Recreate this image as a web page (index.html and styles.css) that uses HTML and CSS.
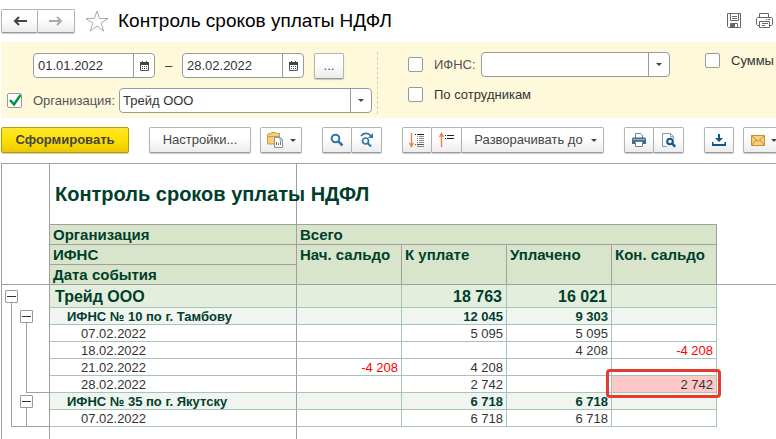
FILE: index.html
```html
<!DOCTYPE html>
<html lang="ru">
	<head>
		<meta charset="UTF-8">
		<title>Контроль сроков уплаты НДФЛ</title>
		<link rel="stylesheet" href="styles.css">
	</head>
	<body>
		<header class="header">
			<div class="group">
				<button class="btn nav" type="button" aria-label="Назад"><svg width="14" height="10" viewBox="0 0 14 10"><path d="M6 1L2 5l4 4M2 5h12" fill="none" stroke="#444" stroke-width="2"/></svg></button>
				<button class="btn nav" type="button" aria-label="Вперед"><svg width="14" height="10" viewBox="0 0 14 10"><path d="M8 1l4 4-4 4M12 5H0" fill="none" stroke="#aaa" stroke-width="2"/></svg></button>
			</div>
			<button class="icon star" type="button" aria-label="В избранное"><svg width="24" height="22" viewBox="0 0 24 22"><path d="M12 1l2.600 7.500H23l-6.800 4.600 2.600 8-6.800-5-6.800 5 2.600-8L1 8.500h8.400z" fill="#fff" stroke="#a5aab3"/></svg></button>
			<h1 class="title">Контроль сроков уплаты НДФЛ</h1>
			<button class="icon save" type="button" aria-label="Сохранить"><svg width="16" height="16" viewBox="0 0 16 16" fill="none" stroke="#666"><path d="M1.500.5h13v14h-12l-1-1z"/><path d="M4.500.5v7h8v-7M6 3.500h5M6 5.500h5M4.500 14.500v-4h7v4"/><path d="M5 11h4v3H5z" fill="#666" stroke="none"/></svg></button>
			<button class="icon print" type="button" aria-label="Печать"><svg width="17" height="16" viewBox="0 0 17 16" fill="none" stroke="#666"><path d="M3.500 4.500v-4h9v4M3.500 12.500h-2l-1-1v-6l1-1h14l1 1v6l-1 1h-2M10 6.500h1M12 6.500h2M3.500 8.500h10v6h-10zM6 10.500h6M6 12.500h3"/></svg></button>
		</header>

		<form class="filter">
			<div class="col period">
				<div class="row dates">
					<div class="field date">
						<input type="text" value="01.01.2022" aria-label="Начало периода">
						<button type="button" aria-label="Выбрать дату"><svg width="9" height="10" viewBox="0 0 9 10"><path d="M.5 1.500h8v8h-8z" fill="#fff" stroke="#555"/><path d="M0 1h9v3H0zM2 0h1v1H2zM6 0h1v1H6zM2 5h1v1H2zM4 5h1v1H4zM6 5h1v1H6zM2 7h1v1H2zM4 7h1v1H4zM6 7h1v1H6z" fill="#444"/></svg></button>
					</div>
					<span class="dash">–</span>
					<div class="field date">
						<input type="text" value="28.02.2022" aria-label="Конец периода">
						<button type="button" aria-label="Выбрать дату"><svg width="9" height="10" viewBox="0 0 9 10"><path d="M.5 1.500h8v8h-8z" fill="#fff" stroke="#555"/><path d="M0 1h9v3H0zM2 0h1v1H2zM6 0h1v1H6zM2 5h1v1H2zM4 5h1v1H4zM6 5h1v1H6zM2 7h1v1H2zM4 7h1v1H4zM6 7h1v1H6z" fill="#444"/></svg></button>
					</div>
					<button class="btn more" type="button">...</button>
				</div>
				<div class="row">
					<input class="check" type="checkbox" id="use_org" checked aria-label="Отбор по организации">
					<label class="muted" for="org">Организация:</label>
					<div class="field combo">
						<select id="org"><option>Трейд ООО</option></select>
						<i class="arrow"></i>
					</div>
				</div>
			</div>
			<div class="col inspection">
				<div class="row">
					<input class="check" type="checkbox" id="use_ifns" aria-label="Отбор по ИФНС">
					<label class="muted" for="ifns">ИФНС:</label>
					<div class="field combo">
						<select id="ifns"><option></option></select>
						<i class="arrow"></i>
					</div>
				</div>
				<div class="row">
					<input class="check" type="checkbox" id="by_staff">
					<label for="by_staff">По сотрудникам</label>
				</div>
			</div>
			<div class="col sums">
				<input class="check" type="checkbox" id="sums">
				<label for="sums">Суммы</label>
			</div>
		</form>

		<div class="toolbar">
			<button class="btn primary" type="button">Сформировать</button>
			<button class="btn settings" type="button">Настройки...</button>
			<button class="btn menu" type="button" aria-label="Варианты отчета">
				<svg width="17" height="16" viewBox="0 0 17 16"><path d="M.5 12V2.500l1-1h2l1-1h4l1 1h3V12z" fill="#f6cd7a" stroke="#cf9a3d"/><path d="M1 4.500h12" stroke="#cf9a3d"/><path d="M7.500 5.500h6l2 2v8h-8z" fill="#fff" stroke="#8296aa"/><path d="M13 5.500v2.500h2.500" fill="none" stroke="#8296aa"/><path d="M9 10h1v3H9z" fill="#e33"/><path d="M11 11h1v2h-1z" fill="#39b"/><path d="M13 9h1v4h-1z" fill="#3a4"/></svg>
				<i class="arrow"></i>
			</button>
			<div class="group">
				<button class="btn tool" type="button" aria-label="Найти"><svg width="14" height="14" viewBox="0 0 14 14" fill="none" stroke="#2e77a8"><circle cx="5.500" cy="5.500" r="3.800" stroke-width="2"/><path d="M8.500 8.500l4 4" stroke-width="2.500"/></svg></button>
				<button class="btn tool" type="button" aria-label="Найти далее"><svg width="14" height="16" viewBox="0 0 14 16" fill="none" stroke="#2e77a8"><path d="M1 4C3 1 8 0 11 4" stroke-width="1.600"/><path d="M13 1v5H8z" fill="#2e77a8" stroke="none"/><circle cx="5.500" cy="9" r="3" stroke-width="1.700"/><path d="M8 11.500l3 3" stroke-width="2"/></svg></button>
			</div>
			<div class="group">
				<button class="btn tool" type="button" aria-label="Развернуть все"><svg width="16" height="16" viewBox="0 0 16 16" fill="none"><path d="M2.500 1v13M.5 11l2 3.500 2-3.500" stroke="#ee8352" stroke-width="1.400"/><path d="M6 2.500h1M8 2.500h7" stroke="#222"/><path d="M8 4.500h1M10 4.500h5M8 6.500h1M10 6.500h5M8 8.500h1M10 8.500h5M8 10.500h1M10 10.500h5M8 14.500h7" stroke="#888"/><path d="M6 12.500h1M8 12.500h7" stroke="#555"/></svg></button>
				<button class="btn tool" type="button" aria-label="Свернуть все"><svg width="16" height="16" viewBox="0 0 16 16" fill="none"><path d="M2.500 15V2M.5 5l2-3.500 2 3.500" stroke="#ee8352" stroke-width="1.400"/><path d="M6 3.500h1M8 3.500h7M6 6.500h1M8 6.500h7" stroke="#222"/></svg></button>
				<button class="btn expand" type="button">Разворачивать до <i class="arrow"></i></button>
			</div>
			<div class="group">
				<button class="btn tool" type="button" aria-label="Печать"><svg width="14" height="14" viewBox="0 0 14 14"><path d="M3.500 5V.5h5l2 2V5" fill="#fff" stroke="#6b8299"/><path d="M1 4.500h12l1 1V11H0V5.500z" fill="#3f6a92"/><path d="M1 6.500h12" stroke="#9db6cc"/><path d="M3.500 8.500h7v5h-7z" fill="#fff" stroke="#6b8299"/></svg></button>
				<button class="btn tool" type="button" aria-label="Предварительный просмотр"><svg width="14" height="15" viewBox="0 0 14 15" fill="none"><path d="M5 13.500H.5V.5h8l3 3V6M8.500.5v3h3" stroke="#8a9bab"/><circle cx="8" cy="8.500" r="2.800" stroke="#0f5586" stroke-width="2"/><path d="M10 10.500l3.200 3.200" stroke="#0f5586" stroke-width="2.400"/></svg></button>
			</div>
			<button class="btn tool" type="button" aria-label="Сохранить"><svg width="14" height="12" viewBox="0 0 14 12"><path d="M6 0h2v4h3L7 8 3 4h3zM0 8h1.500v2h11V8H14v4H0z" fill="#0f5586"/></svg></button>
			<button class="btn menu mail" type="button" aria-label="Отправить">
				<svg width="14" height="11" viewBox="0 0 14 11"><path d="M.5.5h13v10H.5z" fill="#f7cf7e" stroke="#c98f2c"/><path d="M.5.5L7 6.500l6.500-6M.5 10.500L5 5M13.500 10.500L9 5" fill="none" stroke="#c98f2c"/></svg>
				<i class="arrow"></i>
			</button>
		</div>

		<main class="sheet">
			<table class="report">
				<colgroup>
					<col class="c-tree"><col class="c-name"><col class="c-sum"><col class="c-sum"><col class="c-sum"><col class="c-sum"><col>
				</colgroup>
				<thead>
					<tr class="caption">
						<td rowspan="4" class="corner"></td>
						<td class="name"><h2>Контроль сроков уплаты НДФЛ</h2></td>
						<td colspan="4"></td>
						<td rowspan="4" class="rest"></td>
					</tr>
					<tr class="head">
						<th>Организация</th>
						<th colspan="4">Всего</th>
					</tr>
					<tr class="head">
						<th>ИФНС</th>
						<th rowspan="2">Нач. сальдо</th>
						<th rowspan="2">К уплате</th>
						<th rowspan="2">Уплачено</th>
						<th rowspan="2">Кон. сальдо</th>
					</tr>
					<tr class="head">
						<th>Дата события</th>
					</tr>
				</thead>
				<tbody>
					<tr class="org">
						<td rowspan="8" class="gutter">
							<div class="tree">
								<span class="branch branch-org"></span>
								<span class="branch branch-first"></span>
								<span class="branch branch-second"></span>
								<button class="toggle toggle-org" type="button" aria-label="Свернуть"></button>
								<button class="toggle toggle-first" type="button" aria-label="Свернуть"></button>
								<button class="toggle toggle-second" type="button" aria-label="Свернуть"></button>
							</div>
						</td>
						<td class="name">Трейд ООО</td><td></td><td>18 763</td><td>16 021</td><td></td>
					</tr>
					<tr class="ifns">
						<td class="name">ИФНС № 10 по г. Тамбову</td><td></td><td>12 045</td><td>9 303</td><td></td>
					</tr>
					<tr class="day">
						<td class="name">07.02.2022</td><td></td><td>5 095</td><td>5 095</td><td></td>
					</tr>
					<tr class="day">
						<td class="name">18.02.2022</td><td></td><td></td><td>4 208</td><td class="minus">-4 208</td>
					</tr>
					<tr class="day">
						<td class="name">21.02.2022</td><td class="minus">-4 208</td><td>4 208</td><td></td><td></td>
					</tr>
					<tr class="day">
						<td class="name">28.02.2022</td><td></td><td>2 742</td><td></td><td class="debt">2 742</td>
					</tr>
					<tr class="ifns">
						<td class="name">ИФНС № 35 по г. Якутску</td><td></td><td>6 718</td><td>6 718</td><td></td>
					</tr>
					<tr class="day">
						<td class="name">07.02.2022</td><td></td><td>6 718</td><td>6 718</td><td></td>
					</tr>
				</tbody>
				<tfoot>
					<tr class="tail"><td></td><td></td><td colspan="5"></td></tr>
				</tfoot>
			</table>
		</main>
	</body>
</html>
```

FILE: styles.css
```css
*{
	box-sizing: border-box;
	margin: 0;
	padding: 0;
}
body{
	display: flex;
	flex-direction: column;
	min-height: 100vh;
	padding-left: 1px;
	background: #fff;
	color: #333;
	font: 13px/16px "Liberation Sans", Arial, sans-serif;
	overflow-x: hidden;
}
button, input, select{
	font: inherit;
	color: inherit;
}
svg{
	display: block;
	flex: none;
}

/* кнопки */
.btn{
	display: flex;
	align-items: center;
	justify-content: center;
	flex: none;
	height: 26px;
	border: 1px solid #b4b4b4;
	border-bottom-color: #999;
	border-radius: 2px;
	background: linear-gradient(#fff 40%, #ececec);
	box-shadow: 0 1px 1px rgba(0,0,0,0.2);
	color: #444;
	white-space: nowrap;
}
.icon{
	flex: none;
	border: 0;
	background: none;
}
.group{
	display: flex;
	flex: none;
}
.group .btn + .btn{
	border-left: 0;
	border-radius: 0 2px 2px 0;
}
.arrow{
	flex: none;
	width: 0;
	height: 0;
	border: 3px solid transparent;
	border-top-color: #444;
	border-bottom: 0;
}

.header{
	display: flex;
	align-items: center;
	height: 42px;
	padding-right: 3px;
}
.nav{
	width: 37px;
	height: 24px;
}
.star{
	margin-left: 10px;
}
.title{
	flex: 1;
	margin-left: 9px;
	color: #000;
	font-size: 19px;
	line-height: 24px;
	font-weight: normal;
	white-space: nowrap;
}
.print{
	margin-left: 14px;
}

/* отборы */
.filter{
	display: flex;
	height: 76px;
	padding-top: 10px;
	background: #fff9db;
	overflow: hidden;
}
.col{
	flex: none;
}
.row{
	display: flex;
	align-items: center;
	height: 25px;
}
.period{
	width: 377px;
	height: 62px;
	padding: 1px 5px 0 6px;
	border-right: 1px dashed #d5d0b8;
}
.period .row + .row{
	margin-top: 10px;
}
.dates{
	padding-left: 26px;
}
.field{
	position: relative;
	display: flex;
	height: 25px;
	border: 1px solid #9a9a9a;
	border-radius: 4px;
	background: #fff;
	overflow: hidden;
}
.field input, .field select{
	flex: 1;
	min-width: 0;
	padding-left: 4px;
	border: 0;
	background: none;
	appearance: none;
	outline: none;
}
.date{
	width: 122px;
}
.date button{
	display: flex;
	align-items: center;
	justify-content: center;
	width: 21px;
	border: 0;
	border-left: 1px solid #9a9a9a;
	background: none;
}
.dash{
	width: 27px;
	text-align: center;
}
.more{
	width: 30px;
	margin-left: 10px;
}
.combo{
	flex: 1;
}
.combo select{
	padding-left: 3px;
	background: linear-gradient(#9a9a9a, #9a9a9a) right 20px top / 1px 100% no-repeat;
}
.combo .arrow{
	position: absolute;
	right: 7px;
	top: 10px;
	pointer-events: none;
}
.check{
	flex: none;
	width: 15px;
	height: 15px;
	margin-right: 11px;
	border: 1px solid #9a9a9a;
	border-radius: 2px;
	background: #fff;
	appearance: none;
}
.check:checked{
	background: #fff url('data:image/svg+xml,<svg xmlns="http://www.w3.org/2000/svg" viewBox="0 0 13 13"><path d="M2 6l4 4.500L12.500 1" fill="none" stroke="%23079447" stroke-width="2.600"/></svg>');
}
.muted{
	color: #555;
}
.period .muted{
	width: 86px;
}
.inspection{
	width: 292px;
	padding-left: 30px;
}
.inspection .muted{
	width: 47px;
}
.inspection .row + .row{
	margin-top: 5px;
}
.sums{
	display: flex;
	align-items: center;
	height: 17px;
	padding-left: 35px;
}

/* панель команд */
.toolbar{
	display: flex;
	gap: 20px;
	padding: 9px 0 10px;
	overflow: hidden;
}
.primary{
	width: 128px;
	border-color: #b39b00;
	background: linear-gradient(#ffe72e, #ffe000 50%, #e9c800);
	font-weight: bold;
}
.settings{
	width: 102px;
}
.menu{
	gap: 6px;
	width: 42px;
}
.settings + .menu, .tool + .menu{
	margin-left: -11px;
}
.tool{
	width: 30px;
}
.expand{
	gap: 8px;
	width: 142px;
	padding-left: 6px;
}

/* табличный документ */
.sheet{
	display: grid;
	flex: 1;
	border: 1px solid #a0a0a0;
	border-width: 1px 0 0 1px;
}
.report{
	width: 100%;
	table-layout: fixed;
	border-collapse: separate;
	border-spacing: 0;
}
.c-tree{
	width: 48px;
}
.c-name{
	width: 247px;
}
.c-sum{
	width: 105px;
}
.report td, .report th{
	border: 0 solid #a0a0a0;
	white-space: nowrap;
}
.caption td{
	height: 61px;
	border-width: 0 0 1px;
}
.report .corner, .caption .name{
	border-width: 0 1px 1px 0;
}
.caption h2{
	width: 0;
	padding-left: 5px;
	color: #003f2d;
	font-size: 20px;
	line-height: 24px;
}
.head th{
	height: 20px;
	padding: 1px 3px 0;
	border-width: 0 1px 1px 0;
	background: #d8e5cb;
	color: #003f2d;
	font-size: 15px;
	line-height: 18px;
	text-align: left;
	vertical-align: top;
}
tbody td{
	height: 17px;
	padding: 2px 3px 0 0;
	line-height: 14px;
	text-align: right;
}
.report tbody td{
	border-color: #a6c4b7;
	border-width: 0 1px 1px 0;
}
.report tbody .name{
	border-right-color: #a0a0a0;
	text-align: left;
}
.org td{
	height: 23px;
	padding-right: 4px;
	background: #e3efdc;
	color: #003f2d;
	font-size: 16px;
	font-weight: bold;
}
.org .name{
	padding-left: 5px;
}
.ifns td{
	background: #f0f5ef;
	color: #003f2d;
	font-weight: bold;
}
.ifns .name{
	padding-left: 17px;
}
.day .name{
	padding-left: 31px;
}
.minus{
	color: #f00;
}
.debt{
	position: relative;
	background: #ffc8c8;
}
.debt::after{
	content: "";
	position: absolute;
	inset: -7px -5px -6px -6px;
	border: 3px solid #e63a30;
	border-radius: 4px;
}
.tail td{
	height: 12px;
	border-right-width: 1px;
}
.report .tail td:last-child{
	border-right: 0;
}

/* дерево группировок */
.report tbody .gutter{
	padding: 0;
	border-width: 0 1px 0 0;
	border-color: #a0a0a0;
	background: none;
	vertical-align: top;
}
.tree{
	display: grid;
	grid-template-columns: 15px 15px 1fr;
	grid-template-rows: 23px repeat(7, 17px);
	padding-left: 2px;
}
.branch{
	margin: 8px 0 0 7px;
	border: 1px solid #a0a0a0;
	border-width: 0 0 1px 1px;
}
.branch-org{
	grid-area: 1 / 1 / 9 / 4;
}
.branch-first{
	grid-area: 2 / 2 / 7 / 4;
}
.branch-second{
	grid-area: 7 / 2 / 9 / 4;
}
.toggle{
	place-self: center;
	width: 13px;
	height: 13px;
	border: 1px solid #999;
	border-radius: 1px;
	background: linear-gradient(#333, #333) center / 9px 1px no-repeat, #fff;
}
.toggle-org{
	grid-area: 1 / 1;
}
.toggle-first{
	grid-area: 2 / 2;
}
.toggle-second{
	grid-area: 7 / 2;
}
```
